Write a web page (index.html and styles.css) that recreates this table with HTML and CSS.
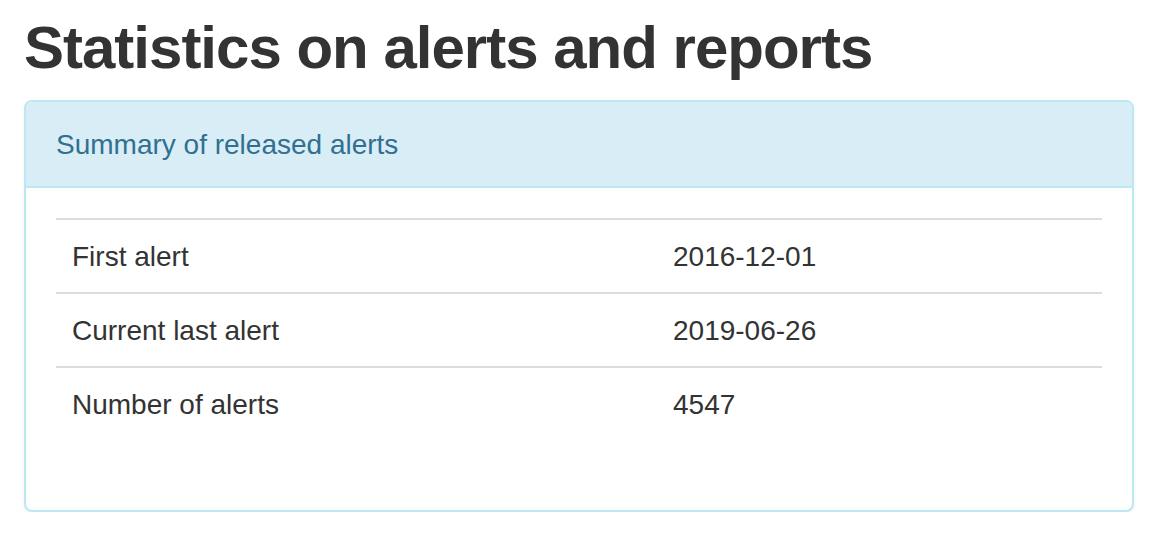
FILE: index.html
```html
<!DOCTYPE html>
<html lang="en">
<head>
<meta charset="utf-8">
<title>Statistics on alerts and reports</title>
<link rel="stylesheet" href="styles.css">
</head>
<body>
<main class="page">
  <h1 class="page-title">Statistics on alerts and reports</h1>
  <section class="panel">
    <div class="panel-heading">
      <h2 class="panel-title">Summary of released alerts</h2>
    </div>
    <div class="panel-body">
      <table class="stats">
        <colgroup><col class="col-label"><col class="col-value"></colgroup>
        <tbody>
          <tr><td>First alert</td><td>2016-12-01</td></tr>
          <tr><td>Current last alert</td><td>2019-06-26</td></tr>
          <tr><td>Number of alerts</td><td>4547</td></tr>
        </tbody>
      </table>
    </div>
  </section>
</main>
</body>
</html>
```

FILE: styles.css
```css
html, body {
  margin: 0;
  padding: 0;
  background: #fff;
}

body {
  font-family: "Liberation Sans", Arial, Helvetica, sans-serif;
  color: #333;
  font-size: 28px;
}

.page {
  width: 1110px;
  padding: 0 36px 0 24px;
}

.page-title {
  margin: 15px 0 19px;
  font-size: 60px;
  line-height: 66px;
  font-weight: bold;
  letter-spacing: -1px;
  color: #333;
}

.panel {
  border: 2px solid #bce8f1;
  border-radius: 8px;
  box-shadow: 0 2px 4px rgba(0, 0, 0, 0.05);
  background: #fff;
}

.panel-heading {
  background: #d9edf7;
  border-bottom: 2px solid #bce8f1;
  border-radius: 6px 6px 0 0;
  padding: 27px 30px 25px;
}

.panel-title {
  margin: 0;
  font-size: 28px;
  line-height: 32px;
  font-weight: normal;
  color: #31708f;
}

.panel-body {
  padding: 30px;
}

.stats {
  width: 100%;
  border-collapse: collapse;
  table-layout: fixed;
  margin-bottom: 40px;
}

.col-label {
  width: 601px;
}

.stats td {
  border-top: 2px solid #ddd;
  padding: 17px 16px 15px;
  line-height: 40px;
  font-size: 28px;
  vertical-align: top;
}
```
